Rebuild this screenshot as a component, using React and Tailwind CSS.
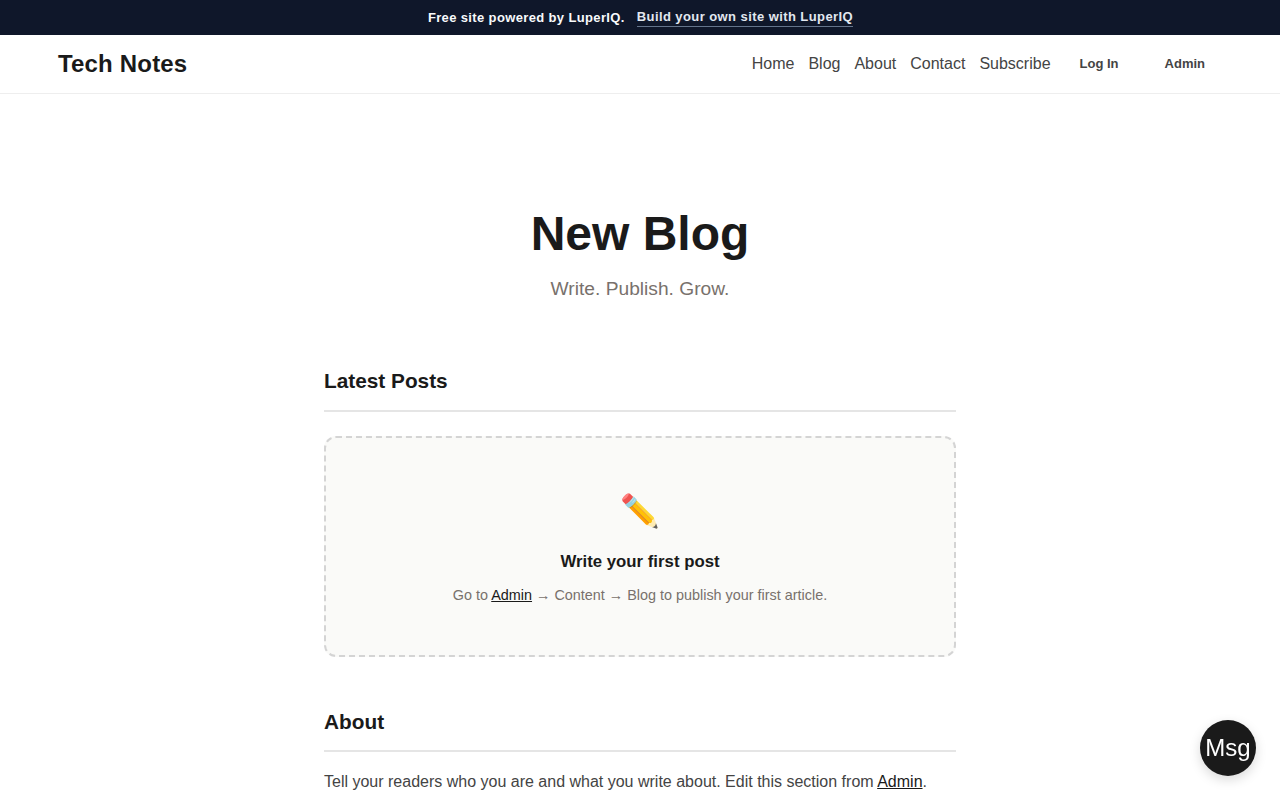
export default function App() {
  return (
    <div className="min-h-screen bg-white font-['Liberation_Sans',Arial,sans-serif] text-[#1a1a1a]">
      <div className="flex h-[35px] items-center justify-center gap-[12px] bg-[#0f172a] pl-[1px] text-[13px] font-bold text-[#f8fafc]">
        <span className="tracking-[0.36px]">Free site powered by LuperIQ.</span>
        <a href="#" className="border-b border-[#64748b] leading-[18px] tracking-[0.42px] text-[#e2e8f0]">Build your own site with LuperIQ</a>
      </div>
      <header className="flex h-[59px] items-center justify-between border-b border-[#eeeeee] pl-[58px] pr-[75px]">
        <a href="#" className="text-[24px] font-bold tracking-[0.18px] text-[#1a1a1a]">Tech Notes</a>
        <nav className="flex items-center text-[16px] text-[#444444]">
          <div className="flex gap-[14px]">
            <a href="#">Home</a>
            <a href="#">Blog</a>
            <a href="#">About</a>
            <a href="#">Contact</a>
            <a href="#">Subscribe</a>
          </div>
          <a href="#" className="ml-[29px] text-[13px] font-bold">Log In</a>
          <a href="#" className="ml-[46px] text-[13px] font-bold">Admin</a>
        </nav>
      </header>
      <main className="mx-auto w-[632px]">
        <section className="pt-[112px] text-center">
          <h1 className="text-[48px] font-bold leading-[56px] text-[#1a1a1a]">New Blog</h1>
          <p className="mt-[15px] text-[19.2px] leading-[23px] text-[#78716c]">Write. Publish. Grow.</p>
        </section>
        <section className="mt-[69px]">
          <h2 className="border-b-2 border-[#e5e5e5] pb-[17px] text-[20.8px] font-bold leading-[24px]">Latest Posts</h2>
          <div className="mt-[24px] flex h-[221px] flex-col items-center rounded-[12px] border-2 border-dashed border-[#d4d4d4] bg-[#fafaf8] pt-[48px] text-center">
            <div className="text-[32px] leading-[51px]">✏️</div>
            <h3 className="mt-[14px] text-[16.8px] font-bold leading-[22px]">Write your first post</h3>
            <p className="mt-[11px] text-[14.4px] leading-[23px] text-[#78716c]">
              Go to <a href="#" className="text-[#1a1a1a] underline">Admin</a> → Content → Blog to publish your first article.
            </p>
          </div>
        </section>
        <section className="mt-[53px]">
          <h2 className="border-b-2 border-[#e5e5e5] pb-[16px] text-[20.8px] font-bold leading-[24px]">About</h2>
          <p className="mt-[17px] text-[16px] leading-[26px] text-[#444444]">
            Tell your readers who you are and what you write about. Edit this section from <a href="#" className="text-[#1a1a1a] underline">Admin</a>.
          </p>
        </section>
      </main>
      <button className="fixed bottom-[24px] right-[24px] flex h-[56px] w-[56px] items-center justify-center rounded-full bg-[#1a1a1a] text-[24px] text-white shadow-[0_4px_12px_rgba(0,0,0,0.15)]">Msg</button>
    </div>
  );
}
